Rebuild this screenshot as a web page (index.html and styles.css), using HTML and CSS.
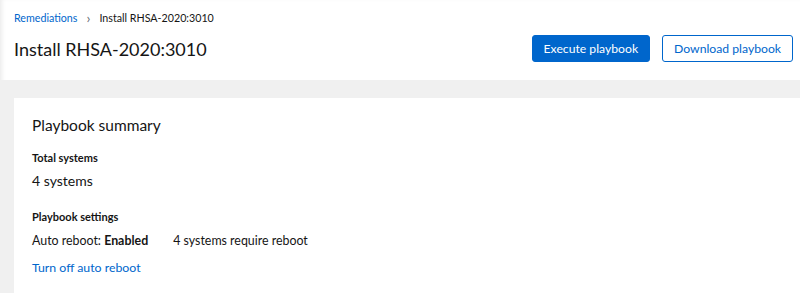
FILE: index.html
```html
<!DOCTYPE html>
<html lang="en">
<head>
  <meta charset="UTF-8" />
  <meta name="viewport" content="width=device-width, initial-scale=1.0" />
  <title>Install RHSA-2020:3010</title>
  <link rel="stylesheet" href="styles.css">
</head>
<body>
  <div class="page">
    <div class="header">
      <nav class="breadcrumb">
        <a href="#">Remediations</a>
        <span class="sep">&rsaquo;</span>
        <span class="current">Install RHSA-2020:3010</span>
      </nav>
      <div class="titleRow">
        <h1>Install RHSA-2020:3010</h1>
        <div class="actions">
          <button class="btn primary">Execute playbook</button>
          <button class="btn secondary">Download playbook</button>
        </div>
      </div>
    </div>

    <div class="main">
      <div class="card">
        <h2>Playbook summary</h2>
        <div class="group">
          <div class="label">Total systems</div>
          <div class="value">4 systems</div>
        </div>
        <div class="group">
          <div class="label">Playbook settings</div>
          <div class="value settings">
            <span>Auto reboot: <b>Enabled</b></span>
            <span>4 systems require reboot</span>
          </div>
          <a class="link" href="#">Turn off auto reboot</a>
        </div>
      </div>
    </div>
  </div>
</body>
</html>
```

FILE: styles.css
```css
body {
  margin: 0;
  background: white;
  overflow: hidden;
  font-family: Lato, 'Liberation Sans', sans-serif;
  color: #151515;
}
.page {
  height: 293px;
  box-shadow: inset 4px 0 4px -2px rgba(0, 0, 0, 0.08);
}
.header {
  padding: 9px 7px 0 14px;
  height: 71px;
}
.breadcrumb {
  font-size: 10.7px;
  display: flex;
  align-items: center;
  height: 16px;
}
.breadcrumb a {
  color: #0066cc;
  text-decoration: none;
}
.breadcrumb .sep {
  color: #6a6e73;
  margin: 0 9px 0 9px;
  font-size: 14px;
}
.titleRow {
  display: flex;
  justify-content: space-between;
  align-items: center;
  margin-top: 10px;
}
h1 {
  margin: 0;
  font-size: 18px;
  font-weight: 400;
}
.actions {
  display: flex;
  gap: 12px;
}
.btn {
  font-family: inherit;
  font-size: 12.2px;
  height: 27px;
  padding: 0 11px;
  border-radius: 3px;
  cursor: pointer;
}
.btn.primary {
  background: #0066cc;
  color: white;
  border: 1px solid #0066cc;
}
.btn.secondary {
  background: white;
  color: #0066cc;
  border: 1px solid #0066cc;
}
.main {
  background: #f0f0f0;
  padding: 18px 0 0 14px;
  height: 195px;
}
.card {
  background: white;
  padding: 18px 18px 0 18px;
  height: 100%;
  box-sizing: border-box;
}
h2 {
  margin: 0 0 17px;
  font-size: 15.5px;
  font-weight: 400;
}
.group {
  margin-bottom: 21px;
}
.label {
  font-size: 11px;
  font-weight: 700;
}
.value {
  font-size: 14px;
  margin-top: 8px;
}
.settings {
  display: flex;
  gap: 25px;
  font-size: 12.4px;
  margin-top: 10px;
}
.link {
  display: inline-block;
  margin-top: 12px;
  font-size: 12.3px;
  color: #0066cc;
  text-decoration: none;
}
```
